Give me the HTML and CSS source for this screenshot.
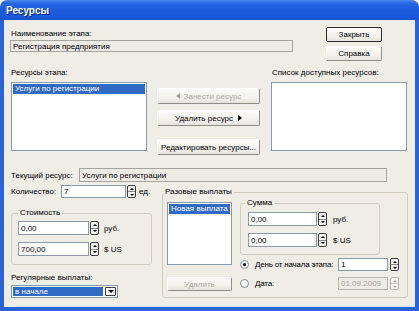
FILE: index.html
```html
<!DOCTYPE html>
<html lang="ru">
<head>
    <meta charset="UTF-8">
    <title>Ресурсы</title>
    <link rel="stylesheet" href="styles.css">
</head>
<body>
<div class="window">
    <div class="titlebar">Ресурсы</div>
    <div class="frame">
        <div class="client">
            <div class="top">
                <div class="stage">
                    <div class="lbl">Наименование этапа:</div>
                    <input class="edit ro stage-edit" type="text" value="Регистрация предприятия" readonly>
                </div>
                <div class="sidebtns">
                    <button class="btn default">Закрыть</button>
                    <button class="btn">Справка</button>
                </div>
            </div>

            <div class="res">
                <div class="rescol">
                    <div class="lbl">Ресурсы этапа:</div>
                    <div class="list res-list">
                        <div class="item sel">Услуги по регистрации</div>
                    </div>
                </div>
                <div class="midbtns">
                    <button class="btn" disabled><span class="tri-l"></span>Занести ресурс</button>
                    <button class="btn del-res">Удалить ресурс<span class="tri-r"></span></button>
                    <button class="btn edit-btn">Редактировать ресурсы...</button>
                </div>
                <div class="rescol avail">
                    <div class="lbl">Список доступных ресурсов:</div>
                    <div class="list res-list"></div>
                </div>
            </div>

            <div class="current">
                <span class="cur-lbl">Текущий ресурс:</span>
                <input class="edit ro cur-edit" type="text" value="Услуги по регистрации" readonly>
            </div>

            <div class="bottom">
                <div class="leftcol">
                    <div class="row qty">
                        <span class="qty-lbl">Количество:</span>
                        <input class="edit qty-edit" type="text" value="7">
                        <span class="spin"><span class="up"></span><span class="down"></span></span>
                        <span class="unit">ед.</span>
                    </div>

                    <fieldset class="group cost">
                        <legend>Стоимость</legend>
                        <div class="row">
                            <input class="edit money" type="text" value="0,00">
                            <span class="spin"><span class="up"></span><span class="down"></span></span>
                            <span class="unit">руб.</span>
                        </div>
                        <div class="row">
                            <input class="edit money" type="text" value="700,00">
                            <span class="spin"><span class="up"></span><span class="down"></span></span>
                            <span class="unit">$ US</span>
                        </div>
                    </fieldset>

                    <div class="lbl reg-lbl">Регулярные выплаты:</div>
                    <div class="combo">
                        <span class="combo-val">в начале</span>
                        <span class="combo-btn"></span>
                    </div>
                </div>

                <fieldset class="group once">
                    <legend>Разовые выплаты</legend>
                    <div class="once-body">
                        <div class="once-left">
                            <div class="list pay-list">
                                <div class="item sel">Новая выплата</div>
                            </div>
                            <button class="btn del-btn" disabled>Удалить</button>
                        </div>
                        <div class="once-right">
                            <fieldset class="group sum">
                                <legend>Сумма</legend>
                                <div class="row">
                                    <input class="edit sum-edit" type="text" value="0,00">
                                    <span class="spin"><span class="up"></span><span class="down"></span></span>
                                    <span class="unit">руб.</span>
                                </div>
                                <div class="row">
                                    <input class="edit sum-edit" type="text" value="0,00">
                                    <span class="spin"><span class="up"></span><span class="down"></span></span>
                                    <span class="unit">$ US</span>
                                </div>
                            </fieldset>
                            <div class="row radio-row first">
                                <span class="radio-lbl"><span class="radio checked"></span>День от начала этапа:</span>
                                <input class="edit day-edit" type="text" value="1">
                                <span class="spin"><span class="up"></span><span class="down"></span></span>
                            </div>
                            <div class="row radio-row">
                                <span class="radio-lbl"><span class="radio"></span>Дата:</span>
                                <input class="edit day-edit" type="text" value="01.09.2009" disabled>
                                <span class="spin off"><span class="up"></span><span class="down"></span></span>
                            </div>
                        </div>
                    </div>
                </fieldset>
            </div>
        </div>
    </div>
</div>
</body>
</html>
```

FILE: styles.css
```css
* {
    box-sizing: border-box;
}
body {
    margin: 0;
    background: #fff;
    font-family: "Liberation Sans", Tahoma, Arial, sans-serif;
    font-size: 8px;
    color: #000;
}
.window {
    width: 419px;
    height: 311px;
    display: flex;
    flex-direction: column;
}
.titlebar {
    height: 20px;
    padding-left: 6px;
    line-height: 21px;
    font-size: 10px;
    font-weight: bold;
    color: #fff;
    text-shadow: 1px 1px 0 #0a2a8a;
    border-radius: 7px 7px 0 0;
    background: linear-gradient(#4b8af0 0%, #2667e2 15%, #1c5cdc 50%, #1a58d8 85%, #1950c8 100%);
}
.frame {
    flex: 1;
    padding: 0 4px 4px;
    background: #2b62d8;
}
.client {
    height: 287px;
    padding-left: 7px;
    background: #eeede6;
}
.lbl {
    line-height: 10px;
    height: 10px;
    white-space: nowrap;
}

/* inputs */
.edit {
    display: block;
    font: inherit;
    color: #000;
    height: 14px;
    padding: 0 2px;
    margin: 0;
    border: 1px solid #8d99a6;
    background: #fff;
    outline: none;
}
.edit.ro {
    background: #ecebe4;
    border-color: #a5a5a0;
}
.edit:disabled {
    background: #ecebe4;
    border-color: #b8b8b0;
    color: #a3a39c;
}

/* buttons */
.btn {
    display: flex;
    align-items: center;
    justify-content: center;
    font: inherit;
    color: #000;
    padding: 0;
    margin: 0;
    background: linear-gradient(#fbfbf9, #f1f0eb 70%, #e3e2db);
    border: 1px solid;
    border-color: #fff #8f8e88 #8f8e88 #fff;
    border-radius: 2px;
    white-space: nowrap;
}
.btn.default {
    border-color: #2a2a2a;
}
.btn:disabled {
    color: #a8a8a2;
}
.tri-l, .tri-r {
    display: inline-block;
    width: 0;
    height: 0;
    border-top: 3.5px solid transparent;
    border-bottom: 3.5px solid transparent;
}
.tri-l {
    border-right: 4px solid #a8a8a2;
    margin-right: 4px;
}
.tri-r {
    border-left: 4px solid #000;
    margin-left: 5px;
}

/* top part */
.top {
    display: flex;
}
.stage {
    width: 283px;
    padding-top: 9px;
}
.stage-edit {
    width: 283px;
    height: 12px;
    margin-top: 1px;
    margin-left: -1px;
}
.sidebtns {
    margin-left: 32px;
    padding-top: 7px;
    display: flex;
    flex-direction: column;
    gap: 4px;
}
.sidebtns .btn {
    width: 56px;
    height: 15px;
}

/* resources */
.res {
    display: flex;
    align-items: flex-start;
    height: 84px;
    margin-top: 6px;
}
.rescol {
    width: 136px;
}
.rescol .lbl {
    line-height: 11px;
    height: 11px;
}
.rescol.avail {
    margin-left: 11px;
}
.rescol.avail .lbl {
    padding-left: 1px;
}
.list {
    background: #fff;
    border: 1px solid #8d99a6;
    padding: 1px;
}
.res-list {
    margin-top: 4px;
    height: 69px;
}
.item {
    line-height: 10px;
    padding-left: 2px;
    white-space: nowrap;
}
.item.sel {
    background: #316ac5;
    color: #fff;
}
.midbtns {
    width: 103px;
    margin-left: 10px;
    padding-top: 21px;
    display: flex;
    flex-direction: column;
}
.midbtns .btn {
    height: 16px;
}
.midbtns .del-res {
    margin-top: 6px;
}
.midbtns .edit-btn {
    margin-top: 13px;
}

/* current resource */
.current {
    display: flex;
    align-items: center;
    margin-top: 17px;
}
.cur-lbl {
    width: 68px;
}
.cur-edit {
    width: 308px;
    height: 14px;
}

/* bottom part */
.bottom {
    display: flex;
    align-items: flex-start;
    margin-top: 3px;
}
.leftcol {
    width: 141px;
}
.row {
    display: flex;
    align-items: center;
}
.qty {
    height: 13px;
}
.qty-lbl {
    width: 50px;
}
.qty-edit {
    width: 65px;
    height: 13px;
}
.unit {
    margin-left: 5px;
    white-space: nowrap;
}
.qty .unit {
    margin-left: 3px;
}

.group {
    margin: 0;
    border: 1px solid #cfcdc0;
    border-radius: 3px;
    min-width: 0;
}
.group legend {
    padding: 0 2px;
    line-height: 10px;
    font-weight: normal;
}
.cost {
    margin-top: 10px;
    width: 141px;
    padding: 3px 6px 8px;
}
.cost .row + .row {
    margin-top: 7px;
}
.money {
    width: 71px;
}

.spin {
    display: flex;
    flex-direction: column;
    width: 9px;
    height: 14px;
    margin-left: 1px;
    border: 1px solid #3c3c3c;
    border-radius: 2px;
    background: #f6f6f2;
}
.qty .spin {
    height: 13px;
}
.spin .up, .spin .down {
    flex: 1;
    display: flex;
    align-items: center;
    justify-content: center;
}
.spin .up {
    border-bottom: 1px solid #8a8a86;
}
.spin .up::after, .spin .down::after {
    content: "";
    width: 0;
    height: 0;
    border-left: 2px solid transparent;
    border-right: 2px solid transparent;
}
.spin .up::after {
    border-bottom: 2px solid #000;
}
.spin .down::after {
    border-top: 2px solid #000;
}
.spin.off {
    border-color: #b5b5ae;
}
.spin.off .up {
    border-bottom-color: #c8c8c0;
}
.spin.off .up::after {
    border-bottom-color: #a8a8a2;
}
.spin.off .down::after {
    border-top-color: #a8a8a2;
}

.reg-lbl {
    margin-top: 7px;
    height: 11px;
    line-height: 11px;
}
.combo {
    display: flex;
    width: 107px;
    height: 13px;
    margin-top: 2px;
    padding: 1px;
    background: #fff;
    border: 1px solid #8d99a6;
}
.combo-val {
    flex: 1;
    background: #316ac5;
    color: #fff;
    line-height: 9px;
    padding-left: 2px;
}
.combo-btn {
    width: 11px;
    margin-left: 2px;
    border: 1px solid #3c3c3c;
    border-radius: 1px;
    background: #f6f6f2;
    display: flex;
    align-items: center;
    justify-content: center;
}
.combo-btn::after {
    content: "";
    border-left: 3px solid transparent;
    border-right: 3px solid transparent;
    border-top: 3px solid #000;
}

/* one-time payments */
.once {
    margin-left: 10px;
    margin-top: 2px;
    width: 246px;
    padding: 1px 4px 6px;
}
.once > legend {
    margin-left: -4px;
}
.once-body {
    display: flex;
}
.once-left {
    width: 65px;
}
.pay-list {
    margin-top: 4px;
    height: 63px;
}
.del-btn {
    width: 65px;
    height: 14px;
    margin-top: 12px;
}
.once-right {
    margin-left: 8px;
}
.sum {
    width: 140px;
    padding: 4px 6px 7px 7px;
}
.sum > legend {
    margin-left: -3px;
}
.sum .row + .row {
    margin-top: 7px;
}
.sum-edit {
    width: 69px;
}
.sum .unit {
    margin-left: 6px;
}
.radio-row {
    margin-top: 6px;
}
.radio-row.first {
    margin-top: 3px;
}
.radio-lbl {
    width: 98px;
    display: flex;
    align-items: center;
    white-space: nowrap;
    letter-spacing: -0.2px;
}
.radio {
    width: 9px;
    height: 9px;
    margin-right: 6px;
    border: 1px solid #7f8a96;
    border-radius: 50%;
    background: #fff;
    display: flex;
    align-items: center;
    justify-content: center;
}
.radio.checked::after {
    content: "";
    width: 3px;
    height: 3px;
    border-radius: 50%;
    background: #000;
}
.day-edit {
    width: 50px;
    height: 13px;
}
.radio-row .spin {
    margin-left: 2px;
    height: 13px;
}
```
